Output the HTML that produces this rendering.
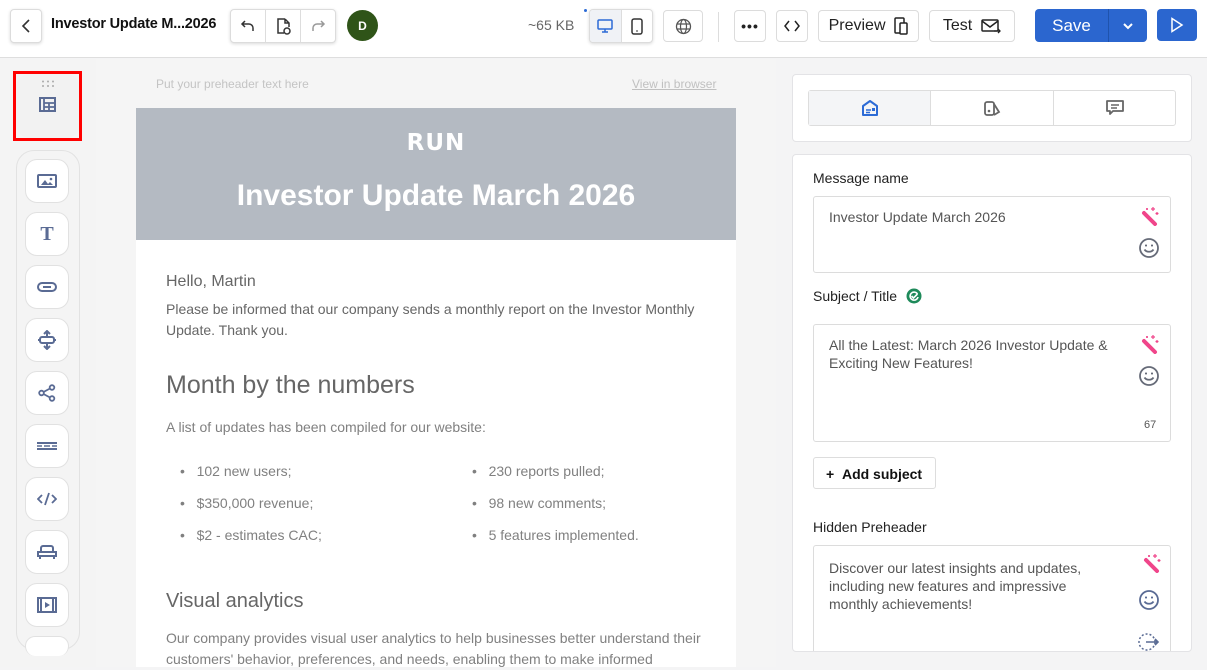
<!DOCTYPE html>
<html><head><meta charset="utf-8"><style>
*{box-sizing:border-box;margin:0;padding:0}
body{width:1207px;height:667px;overflow:hidden;font-family:"Liberation Sans",Arial,sans-serif;background:#f4f4f5;position:relative;color:#222}
.a{position:absolute}
.top{left:0;top:0;width:1207px;height:58px;background:#fff;border-bottom:1px solid #dedede}
.btn{position:absolute;background:#fff;border:1px solid #dcdcdc;border-radius:4px;display:flex;align-items:center;justify-content:center;font-size:16px;color:#222}
.sh{box-shadow:0 1px 3px rgba(0,0,0,.15)}
.side{width:44px;height:44px;border-radius:12px;border:1px solid #e1e1e1;background:#fff;left:25px;display:flex;align-items:center;justify-content:center}
.em{color:#666;font-size:14px}
.li{font-size:14px;color:#808080}
.card{background:#fff;border:1px solid #e3e3e6;border-radius:4px}
.fld{position:absolute;left:813px;width:358px;border:1px solid #dcdcdc;border-radius:3px;background:#fff;font-size:14px;color:#555;padding:0 0 0 15px;line-height:18px}
.lbl{position:absolute;left:813px;font-size:14px;color:#222}
</style></head><body>
<div class="a top"></div>
<div class="btn sh" style="left:10px;top:9px;width:32px;height:34px"><svg width="12" height="16"><path d="M9 2L3 8l6 6" stroke="#333" stroke-width="1.6" fill="none"/></svg></div>
<div class="a" style="left:51px;top:16px;font-size:14.5px;font-weight:bold;color:#111;letter-spacing:-0.2px">Investor Update M...2026</div>
<div class="btn sh" style="left:230px;top:9px;width:106px;height:34px;justify-content:flex-start">
<div style="width:35px;height:32px;border-right:1px solid #ddd;display:flex;align-items:center;justify-content:center"><svg width="16" height="16"><path d="M5 3L2 6l3 3M2 6h7a4 4 0 0 1 4 4v3" stroke="#333" stroke-width="1.5" fill="none"/></svg></div>
<div style="width:35px;height:32px;border-right:1px solid #ddd;display:flex;align-items:center;justify-content:center"><svg width="16" height="18"><path d="M10 2H3v14h6M10 2l4 4v4M10 2v4h4" stroke="#333" stroke-width="1.5" fill="none"/><circle cx="12" cy="14" r="3" stroke="#333" stroke-width="1.5" fill="none"/></svg></div>
<div style="width:34px;height:32px;display:flex;align-items:center;justify-content:center"><svg width="16" height="16"><path d="M11 3l3 3-3 3M14 6H7a4 4 0 0 0-4 4v3" stroke="#999" stroke-width="1.5" fill="none"/></svg></div></div>
<div class="a" style="left:347px;top:10px;width:31px;height:31px;border-radius:50%;background:#2f5418;color:#fff;font-size:12px;font-weight:bold;display:flex;align-items:center;justify-content:center">D</div>
<div class="a" style="left:528px;top:17px;font-size:14px;color:#666">~65 KB</div>
<div class="a" style="left:584px;top:9px;width:3px;height:3px;border-radius:50%;background:#2c6bd6"></div>
<div class="btn sh" style="left:589px;top:9px;width:64px;height:34px;justify-content:flex-start;overflow:hidden">
<div style="width:32px;height:32px;background:#f0f2f6;border-right:1px solid #ddd;display:flex;align-items:center;justify-content:center"><svg width="16" height="14"><rect x="1" y="1" width="14" height="9" rx="1" stroke="#2c6bd6" stroke-width="1.5" fill="none"/><path d="M5 13h6M8 10v3" stroke="#2c6bd6" stroke-width="1.5"/></svg></div>
<div style="width:31px;display:flex;justify-content:center"><svg width="12" height="17"><rect x="1" y="1" width="10" height="15" rx="2" stroke="#333" stroke-width="1.5" fill="none"/><path d="M5 13h2" stroke="#333"/></svg></div></div>
<div class="btn" style="left:663px;top:10px;width:40px;height:32px"><svg width="17" height="17"><circle cx="8.5" cy="8.5" r="7" stroke="#555" stroke-width="1.3" fill="none"/><ellipse cx="8.5" cy="8.5" rx="3" ry="7" stroke="#555" stroke-width="1.2" fill="none"/><path d="M2 6h13M2 11h13" stroke="#555" stroke-width="1.2"/></svg></div>
<div class="a" style="left:718px;top:12px;width:1px;height:30px;background:#ddd"></div>
<div class="btn" style="left:734px;top:10px;width:32px;height:32px;font-weight:bold;letter-spacing:1px;font-size:14px">•••</div>
<div class="btn" style="left:776px;top:10px;width:32px;height:32px"><svg width="16" height="12"><path d="M5 1L1 6l4 5M11 1l4 5-4 5" stroke="#222" stroke-width="1.5" fill="none"/></svg></div>
<div class="btn" style="left:818px;top:10px;width:101px;height:32px">Preview&nbsp;&nbsp;<svg width="14" height="18"><rect x="1" y="1" width="9" height="15" rx="1" stroke="#222" stroke-width="1.5" fill="none"/><rect x="6" y="6" width="7" height="11" rx="1" stroke="#222" stroke-width="1.5" fill="#fff"/></svg></div>
<div class="btn" style="left:929px;top:10px;width:86px;height:32px">Test&nbsp;&nbsp;<svg width="20" height="16"><rect x="1" y="2" width="16" height="11" rx="1" stroke="#222" stroke-width="1.5" fill="none"/><path d="M1 3l8 6 8-6" stroke="#222" stroke-width="1.5" fill="none"/><path d="M13 13h6M17 11l2 2-2 2" stroke="#222" stroke-width="1.3" fill="#fff"/></svg></div>
<div class="a" style="left:1035px;top:9px;width:112px;height:33px;background:#2b66cf;border-radius:4px;color:#fff;font-size:17px"><div style="position:absolute;left:0;width:73px;top:7px;text-align:center">Save</div><div style="position:absolute;left:73px;top:0;width:1px;height:33px;background:#1f53ad"></div><svg class="a" style="left:87px;top:13px" width="12" height="8"><path d="M2 2l4 4 4-4" stroke="#fff" stroke-width="2" fill="none"/></svg></div>
<div class="a" style="left:1157px;top:9px;width:40px;height:32px;background:#2b66cf;border-radius:4px"><svg class="a" style="left:13px;top:8px" width="14" height="16"><path d="M2 1.5l10 6.5-10 6.5z" stroke="#fff" stroke-width="1.5" fill="none"/></svg></div>

<!-- left sidebar -->
<div class="a" style="left:0;top:59px;width:96px;height:608px;background:#f4f4f4"></div>
<div class="a" style="left:16px;top:74px;width:64px;height:64px;background:#f2f2f2;border-radius:14px"></div>
<div class="a" style="left:13px;top:71px;width:69px;height:70px;border:3px solid #ff0000"></div>
<svg class="a" style="left:41px;top:80px" width="14" height="8"><g fill="#aaa"><circle cx="2" cy="1.5" r="1"/><circle cx="7" cy="1.5" r="1"/><circle cx="12" cy="1.5" r="1"/><circle cx="2" cy="6" r="1"/><circle cx="7" cy="6" r="1"/><circle cx="12" cy="6" r="1"/></g></svg>
<svg class="a" style="left:38px;top:95px" width="20" height="20"><rect x="2" y="3" width="15" height="13" stroke="#5a6b94" stroke-width="2" fill="none"/><path d="M6 3v13M6 8h11M11 8v8M6 12h11" stroke="#5a6b94" stroke-width="1.8"/></svg>
<div class="a" style="left:16px;top:150px;width:64px;height:500px;border:1px solid #e2e2e2;border-radius:18px;background:#f4f4f4"></div>
<div class="a side" style="top:159px"><svg width="20" height="16"><rect x="1" y="2" width="18" height="12" rx="1" stroke="#5a6b94" stroke-width="2" fill="none"/><path d="M4 12l4-5 3 4 2-2 3 3z" fill="#5a6b94"/><circle cx="14" cy="6" r="1.3" fill="#5a6b94"/></svg></div>
<div class="a side" style="top:212px;font-family:'Liberation Serif',serif;font-weight:bold;font-size:20px;color:#5a6b94">T</div>
<div class="a side" style="top:265px"><svg width="20" height="10"><rect x="1" y="1" width="18" height="8" rx="4" stroke="#5a6b94" stroke-width="2" fill="none"/><path d="M6 5h8" stroke="#5a6b94" stroke-width="2"/></svg></div>
<div class="a side" style="top:318px"><svg width="20" height="20"><path d="M1 10h18M10 1v18M7 4l3-3 3 3M7 16l3 3 3-3" stroke="#5a6b94" stroke-width="2" fill="none"/><rect x="3" y="7" width="14" height="6" rx="2" stroke="#5a6b94" stroke-width="2" fill="#fff"/></svg></div>
<div class="a side" style="top:371px"><svg width="18" height="18"><circle cx="14" cy="3.5" r="2.3" stroke="#5a6b94" stroke-width="1.8" fill="none"/><circle cx="3.5" cy="9" r="2.3" stroke="#5a6b94" stroke-width="1.8" fill="none"/><circle cx="14" cy="14.5" r="2.3" stroke="#5a6b94" stroke-width="1.8" fill="none"/><path d="M5.5 8l6.5-3.5M5.5 10l6.5 3.5" stroke="#5a6b94" stroke-width="1.8"/></svg></div>
<div class="a side" style="top:424px"><svg width="20" height="10"><path d="M0 2h20M0 8h20" stroke="#5a6b94" stroke-width="2"/><path d="M0 5h5M7 5h6M15 5h5" stroke="#5a6b94" stroke-width="1.5"/></svg></div>
<div class="a side" style="top:477px"><svg width="20" height="14"><path d="M5 3L1 7l4 4M15 3l4 4-4 4M12 1L8 13" stroke="#5a6b94" stroke-width="1.8" fill="none"/></svg></div>
<div class="a side" style="top:530px"><svg width="20" height="16"><path d="M4 8V4a2 2 0 0 1 2-2h8a2 2 0 0 1 2 2v4M1 8h18v4H1zM3 12v3M17 12v3" stroke="#5a6b94" stroke-width="2" fill="none"/><path d="M6 8h8" stroke="#5a6b94" stroke-width="2"/></svg></div>
<div class="a side" style="top:583px"><svg width="20" height="16"><rect x="1" y="1" width="18" height="14" stroke="#5a6b94" stroke-width="2" fill="none"/><path d="M4 1v14M16 1v14" stroke="#5a6b94" stroke-width="2"/><path d="M8 5l5 3-5 3z" fill="#5a6b94"/></svg></div>
<div class="a side" style="top:636px;height:20px;border-bottom:none"></div>

<!-- email canvas -->
<div class="a" style="left:96px;top:59px;width:680px;height:608px;background:#f5f5f5"></div>
<div class="a" style="left:156px;top:77px;font-size:12px;color:#c4c4c4">Put your preheader text here</div>
<div class="a" style="left:632px;top:77px;font-size:12px;color:#c0c0c0;text-decoration:underline">View in browser</div>
<div class="a" style="left:136px;top:108px;width:600px;height:132px;background:#b4bac2;color:#fff;text-align:center">
<div style="position:absolute;left:0;right:0;top:22px;font-size:23px;font-weight:900;letter-spacing:1px;font-family:'DejaVu Sans',sans-serif">RUN</div>
<div style="position:absolute;left:0;right:0;top:71px;font-size:30px;font-weight:bold">Investor Update March 2026</div></div>
<div class="a" style="left:136px;top:240px;width:600px;height:427px;background:#fff"></div>
<div class="a em" style="left:166px;top:273px;font-size:16px">Hello, Martin</div>
<div class="a em" style="left:166px;top:299px;width:545px;line-height:21px">Please be informed that our company sends a monthly report on the Investor Monthly Update. Thank you.</div>
<div class="a" style="left:166px;top:371px;font-size:25px;color:#666">Month by the numbers</div>
<div class="a li" style="left:166px;top:419px">A list of updates has been compiled for our website:</div>
<div class="a li" style="left:180px;top:455px;line-height:32px">•&nbsp;&nbsp;&nbsp;102 new users;<br>•&nbsp;&nbsp;&nbsp;$350,000 revenue;<br>•&nbsp;&nbsp;&nbsp;$2 - estimates CAC;</div>
<div class="a li" style="left:472px;top:455px;line-height:32px">•&nbsp;&nbsp;&nbsp;230 reports pulled;<br>•&nbsp;&nbsp;&nbsp;98 new comments;<br>•&nbsp;&nbsp;&nbsp;5 features implemented.</div>
<div class="a" style="left:166px;top:590px;font-size:20px;color:#666">Visual analytics</div>
<div class="a li" style="left:166px;top:628px;width:560px;line-height:21px">Our company provides visual user analytics to help businesses better understand their customers' behavior, preferences, and needs, enabling them to make informed</div>

<!-- right panel -->
<div class="a card" style="left:792px;top:74px;width:400px;height:68px"></div>
<div class="a" style="left:808px;top:90px;width:368px;height:36px;border:1px solid #ddd;border-radius:3px;display:flex">
<div style="width:122px;background:#f4f5f7;border-right:1px solid #ddd;display:flex;align-items:center;justify-content:center"><svg width="18" height="18"><path d="M2 7l7-5 7 5v9H2z" stroke="#2c6bd6" stroke-width="2" fill="none" stroke-linejoin="round"/><path d="M5 11h5M5 13.5h4" stroke="#2c6bd6" stroke-width="1.5"/><rect x="11" y="9" width="3" height="3" fill="#2c6bd6"/></svg></div>
<div style="width:123px;border-right:1px solid #ddd;display:flex;align-items:center;justify-content:center"><svg width="18" height="18"><rect x="2" y="3" width="9" height="13" rx="2" stroke="#666" stroke-width="1.8" fill="none"/><path d="M11 5l5 8-5 3" stroke="#666" stroke-width="1.8" fill="none"/><circle cx="6" cy="12" r="1.3" fill="#666"/></svg></div>
<div style="flex:1;display:flex;align-items:center;justify-content:center"><svg width="20" height="18"><path d="M2 2h16v10H8l-3 3v-3H2z" stroke="#666" stroke-width="1.8" fill="none" stroke-linejoin="round"/><path d="M6 6h8M6 9h6" stroke="#666" stroke-width="1.5"/></svg></div></div>

<div class="a card" style="left:792px;top:154px;width:400px;height:498px;overflow:hidden">
<div class="fld" style="left:20px;top:390px;height:120px;padding-top:13px;padding-right:70px">Discover our latest insights and updates, including new features and impressive monthly achievements!</div>
</div>
<div class="lbl" style="top:170px">Message name</div>
<div class="fld" style="top:196px;height:77px;padding-top:11px">Investor Update March 2026</div>
<div class="lbl" style="top:288px">Subject / Title <svg style="vertical-align:-3px;margin-left:5px" width="16" height="16"><circle cx="8" cy="8" r="7.5" fill="#1e8a5a"/><path d="M11.5 6A4 4 0 1 0 12 9" stroke="#fff" stroke-width="1.6" fill="none"/><path d="M5.5 8l2 2 4-4" stroke="#fff" stroke-width="1.6" fill="none"/></svg></div>
<div class="fld" style="top:324px;height:118px;padding-top:11px;padding-right:50px">All the Latest: March 2026 Investor Update &amp; Exciting New Features!</div>
<div class="a" style="left:1144px;top:419px;font-size:11px;color:#555">67</div>
<div class="a" style="left:813px;top:457px;width:123px;height:32px;border:1px solid #ddd;border-radius:3px;background:#fff;font-size:14px;font-weight:bold;color:#111;padding:8px 0 0 12px">+&nbsp;&nbsp;Add subject</div>
<div class="lbl" style="top:519px">Hidden Preheader</div>

<!-- icons in fields -->
<svg class="a" style="left:1139px;top:206px" width="20" height="20"><path d="M5 7l11 11" stroke="#f0458a" stroke-width="4" stroke-linecap="round"/><path d="M14 1v4M12 3h4M18 6v3M16.5 7.5h3M8 2v2M7 3h2" stroke="#f0458a" stroke-width="1.2"/></svg>
<svg class="a" style="left:1138px;top:237px" width="22" height="22"><circle cx="11" cy="11" r="9" stroke="#666b78" stroke-width="1.8" fill="none"/><path d="M6.5 12.5a5 4 0 0 0 9 0" stroke="#666b78" stroke-width="1.8" fill="none"/><path d="M7 8.5h2M13 8.5h2" stroke="#666b78" stroke-width="1.8"/></svg>
<svg class="a" style="left:1139px;top:334px" width="20" height="20"><path d="M5 7l11 11" stroke="#f0458a" stroke-width="4" stroke-linecap="round"/><path d="M14 1v4M12 3h4M18 6v3M16.5 7.5h3M8 2v2M7 3h2" stroke="#f0458a" stroke-width="1.2"/></svg>
<svg class="a" style="left:1138px;top:365px" width="22" height="22"><circle cx="11" cy="11" r="9" stroke="#666b78" stroke-width="1.8" fill="none"/><path d="M6.5 12.5a5 4 0 0 0 9 0" stroke="#666b78" stroke-width="1.8" fill="none"/><path d="M7 8.5h2M13 8.5h2" stroke="#666b78" stroke-width="1.8"/></svg>
<svg class="a" style="left:1141px;top:553px" width="20" height="20"><path d="M5 7l11 11" stroke="#f0458a" stroke-width="4" stroke-linecap="round"/><path d="M14 1v4M12 3h4M18 6v3M16.5 7.5h3M8 2v2M7 3h2" stroke="#f0458a" stroke-width="1.2"/></svg>
<svg class="a" style="left:1138px;top:589px" width="22" height="22"><circle cx="11" cy="11" r="9" stroke="#5a6b94" stroke-width="1.8" fill="none"/><path d="M6.5 12.5a5 4 0 0 0 9 0" stroke="#5a6b94" stroke-width="1.8" fill="none"/><path d="M7 8.5h2M13 8.5h2" stroke="#5a6b94" stroke-width="1.8"/></svg>
<svg class="a" style="left:1138px;top:632px" width="22" height="20"><circle cx="9" cy="10" r="8" stroke="#5a6b94" stroke-width="1.5" fill="none" stroke-dasharray="2 2"/><path d="M8 10h12M17 7l3 3-3 3" stroke="#5a6b94" stroke-width="1.6" fill="none"/></svg>
</body></html>
